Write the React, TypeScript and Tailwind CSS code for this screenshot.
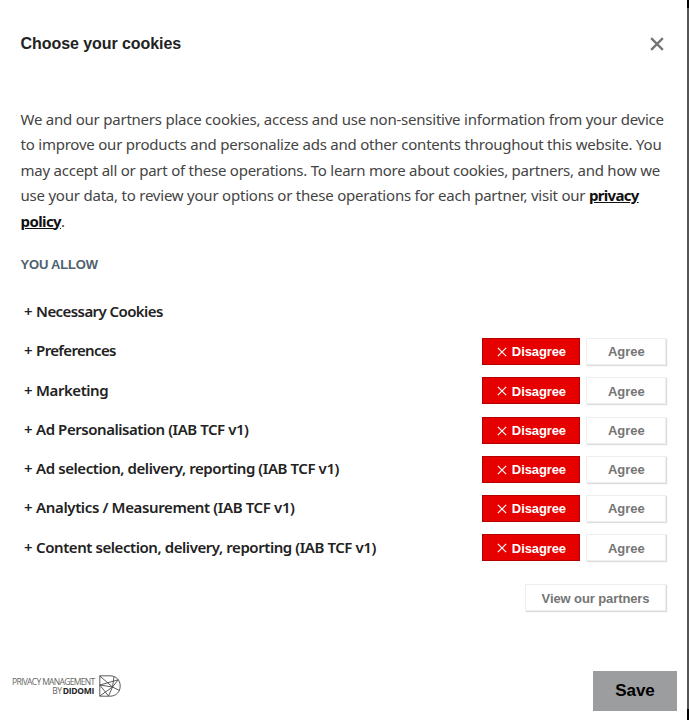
import React from "react";

const purposes = [
  { label: "Necessary Cookies", toggle: false, spacing: "tracking-[-0.58px]" },
  { label: "Preferences", toggle: true, spacing: "tracking-[-0.65px]" },
  { label: "Marketing", toggle: true, spacing: "tracking-[-0.45px]" },
  { label: "Ad Personalisation (IAB TCF v1)", toggle: true, spacing: "tracking-[-0.45px]" },
  { label: "Ad selection, delivery, reporting (IAB TCF v1)", toggle: true, spacing: "tracking-[-0.42px]" },
  { label: "Analytics / Measurement (IAB TCF v1)", toggle: true, spacing: "tracking-[-0.37px]" },
  { label: "Content selection, delivery, reporting (IAB TCF v1)", toggle: true, spacing: "tracking-[-0.43px]" },
];

function Cross({ className, width }: { className: string; width: number }) {
  return (
    <svg viewBox="0 0 12 12" className={className} fill="none" stroke="currentColor" strokeWidth={width}>
      <path d="M1 1L11 11M11 1L1 11" />
    </svg>
  );
}

function DidomiMark() {
  return (
    <svg viewBox="0 0 22 22" className="h-[22px] w-[22px]" fill="none" stroke="#4a4a4a" strokeWidth="0.9">
      <path d="M0.8 0.8H11C17 0.8 21.2 5 21.2 11S17 21.2 11 21.2H0.8Z" />
      <path d="M0.8 10L13.5 12L19.2 4.8M13.5 12L20.5 15.5M13.5 12L15 1.8M0.8 1L13.5 12L9.5 21M19.2 4.8L0.8 10M13.5 12L0.8 21M0.8 10L9.5 21" />
    </svg>
  );
}

export default function App() {
  return (
    <div className="flex h-[720px] w-[689px] overflow-hidden bg-white font-['Liberation_Sans',Arial,sans-serif]">
      <main className="flex min-w-0 flex-1 flex-col">
        <header className="flex h-[87px] items-center justify-between pr-[23px] pl-[20.5px]">
          <h1 className="text-[16px] leading-[20px] font-bold tracking-[-0.06px] text-[#222]">Choose your cookies</h1>
          <Cross className="h-[14px] w-[14px] text-[#757575]" width={2} />
        </header>
        <section className="mt-[19.5px] h-[128px] pl-[20.5px] font-['Noto_Sans','Open_Sans',sans-serif] text-[15px] leading-[25.5px] whitespace-nowrap text-[#444]">
          <p className="tracking-[-0.23px]">We and our partners place cookies, access and use non-sensitive information from your device</p>
          <p className="tracking-[-0.22px]">to improve our products and personalize ads and other contents throughout this website. You</p>
          <p className="tracking-[-0.24px]">may accept all or part of these operations. To learn more about cookies, partners, and how we</p>
          <p className="tracking-[-0.22px]">use your data, to review your options or these operations for each partner, visit our <b className="font-bold tracking-[-0.7px] text-[#111] underline">privacy</b></p>
          <p className="tracking-[-0.3px]"><b className="font-bold tracking-[-0.6px] text-[#111] underline">policy</b>.</p>
        </section>
        <h2 className="mt-[20px] pl-[20.5px] text-[13px] leading-[20px] font-bold tracking-[-0.18px] text-[#4e6270]">YOU ALLOW</h2>
        <ul className="mt-[17px] flex flex-col">
          {purposes.map((p) => (
            <li key={p.label} className="flex h-[39.25px] items-center justify-between pr-[20.6px] pl-[24px]">
              <span className="flex gap-[3.5px] font-['Noto_Sans','Open_Sans',sans-serif] text-[15px] leading-[20px] font-semibold whitespace-nowrap text-[#222]">
                <span>+</span>
                <span className={p.spacing}>{p.label}</span>
              </span>
              {p.toggle && (
                <span className="flex gap-[6px] pt-[2.5px] text-[13px] font-bold">
                  <button className="flex h-[27px] w-[98px] items-center justify-center gap-[5px] border border-[#b30000] bg-[#e60000] pt-px tracking-[-0.1px] text-white">
                    <Cross className="h-[10px] w-[10px]" width={1.4} />
                    Disagree
                  </button>
                  <button className="h-[27px] w-[80px] border border-[#eee] bg-white pt-px text-[#757575] shadow-[1px_1px_1px_#ddd]">Agree</button>
                </span>
              )}
            </li>
          ))}
        </ul>
        <div className="mt-[18px] flex justify-end pr-[21px]">
          <button className="h-[27px] w-[141px] border border-[#eee] bg-white pt-px text-[13px] font-bold tracking-[-0.1px] text-[#757575] shadow-[1px_1px_1px_#ddd]">View our partners</button>
        </div>
        <footer className="mt-auto mb-[9px] flex items-center justify-between pr-[10px] pl-[12px]">
          <div className="mt-[-10px] flex items-center gap-[5px]">
            <p className="w-[82px] text-right font-['Open_Sans','Noto_Sans',sans-serif] text-[8.5px] leading-[9.5px] tracking-[-0.67px] whitespace-nowrap text-[#666]">
              PRIVACY MANAGEMENT<br />BY <b className="tracking-[-0.3px] text-[#222]">DIDOMI</b>
            </p>
            <DidomiMark />
          </div>
          <button className="h-[40px] w-[84px] bg-[#9c9d9e] text-[17px] font-bold tracking-[-0.1px] text-black">Save</button>
        </footer>
      </main>
      <div className="flex w-[2px] flex-col bg-[#555]">
        <div className="h-[8px] bg-black" />
        <div className="mt-auto h-[11px] bg-black" />
      </div>
    </div>
  );
}
